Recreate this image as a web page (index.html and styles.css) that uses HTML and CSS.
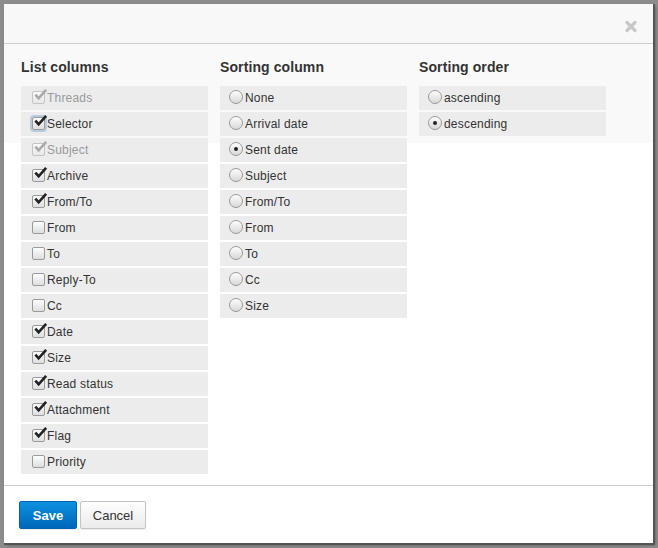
FILE: index.html
```html
<!DOCTYPE html>
<html>
<head>
<meta charset="utf-8">
<link rel="stylesheet" href="styles.css">
</head>
<body>
<div class="dialog">
  <div class="header">
    <span class="close" aria-label="Close">
      <svg width="12" height="13" viewBox="0 0 12 13"><path d="M2 2.5 L10 10.5 M10 2.5 L2 10.5" stroke="#c8c8c8" stroke-width="3.2" stroke-linecap="round"/></svg>
    </span>
  </div>
  <div class="content">
    <div class="col">
      <h3>List columns</h3>
      <div class="row disabled"><span class="cb"><svg class="tick" viewBox="0 0 16 16"><path d="M2.5 7 L6 11 L14 2"/></svg></span>Threads</div>
      <div class="row"><span class="cb focus"><svg class="tick" viewBox="0 0 16 16"><path d="M2.5 7 L6 11 L14 2"/></svg></span>Selector</div>
      <div class="row disabled"><span class="cb"><svg class="tick" viewBox="0 0 16 16"><path d="M2.5 7 L6 11 L14 2"/></svg></span>Subject</div>
      <div class="row"><span class="cb"><svg class="tick" viewBox="0 0 16 16"><path d="M2.5 7 L6 11 L14 2"/></svg></span>Archive</div>
      <div class="row"><span class="cb"><svg class="tick" viewBox="0 0 16 16"><path d="M2.5 7 L6 11 L14 2"/></svg></span>From/To</div>
      <div class="row"><span class="cb"></span>From</div>
      <div class="row"><span class="cb"></span>To</div>
      <div class="row"><span class="cb"></span>Reply-To</div>
      <div class="row"><span class="cb"></span>Cc</div>
      <div class="row"><span class="cb"><svg class="tick" viewBox="0 0 16 16"><path d="M2.5 7 L6 11 L14 2"/></svg></span>Date</div>
      <div class="row"><span class="cb"><svg class="tick" viewBox="0 0 16 16"><path d="M2.5 7 L6 11 L14 2"/></svg></span>Size</div>
      <div class="row"><span class="cb"><svg class="tick" viewBox="0 0 16 16"><path d="M2.5 7 L6 11 L14 2"/></svg></span>Read status</div>
      <div class="row"><span class="cb"><svg class="tick" viewBox="0 0 16 16"><path d="M2.5 7 L6 11 L14 2"/></svg></span>Attachment</div>
      <div class="row"><span class="cb"><svg class="tick" viewBox="0 0 16 16"><path d="M2.5 7 L6 11 L14 2"/></svg></span>Flag</div>
      <div class="row"><span class="cb"></span>Priority</div>
    </div>
    <div class="col">
      <h3>Sorting column</h3>
      <div class="row"><span class="rb"></span>None</div>
      <div class="row"><span class="rb"></span>Arrival date</div>
      <div class="row"><span class="rb on"></span>Sent date</div>
      <div class="row"><span class="rb"></span>Subject</div>
      <div class="row"><span class="rb"></span>From/To</div>
      <div class="row"><span class="rb"></span>From</div>
      <div class="row"><span class="rb"></span>To</div>
      <div class="row"><span class="rb"></span>Cc</div>
      <div class="row"><span class="rb"></span>Size</div>
    </div>
    <div class="col">
      <h3>Sorting order</h3>
      <div class="row"><span class="rb"></span>ascending</div>
      <div class="row"><span class="rb on"></span>descending</div>
    </div>
  </div>
  <div class="footer">
    <button class="btn primary">Save</button>
    <button class="btn">Cancel</button>
  </div>
</div>
</body>
</html>
```

FILE: styles.css
```css
html, body {
  margin: 0;
  padding: 0;
}
body {
  background: #8c8c8c;
  width: 658px;
  height: 548px;
  overflow: hidden;
  font-family: "Liberation Sans", Arial, sans-serif;
  color: #333;
}
.dialog {
  margin: 4px 0 0 4px;
  width: 649px;
  height: 539px;
  background: #fff;
  display: flex;
  flex-direction: column;
  box-shadow: 1px 1px 0 1px #555, 2px 2px 3px rgba(0,0,0,0.4);
}
.header {
  height: 39px;
  flex: none;
  background: #f8f8f8;
  border-bottom: 1px solid #cfcfcf;
  display: flex;
  justify-content: flex-end;
  align-items: flex-start;
}
.close {
  margin: 16px 16px 0 0;
  width: 12px;
  height: 13px;
  display: block;
}
.close svg { display: block; }
.content {
  flex: 1;
  padding: 13px 0 0 17px;
  background: linear-gradient(#f9f9f9 0, #f9f9f9 99px, #fff 99px);
  display: grid;
  grid-template-columns: 187px 187px 187px;
  column-gap: 12px;
  align-content: start;
  align-items: start;
}
.col { display: flex; flex-direction: column; }
h3 {
  margin: 0 0 9px 0;
  font-size: 14px;
  line-height: 20px;
  font-weight: bold;
  color: #333;
  letter-spacing: 0.1px;
}
.row {
  height: 24px;
  margin-bottom: 2px;
  background: #ececec;
  display: flex;
  align-items: center;
  padding-left: 11px;
  font-size: 12px;
  color: #333;
  letter-spacing: 0.2px;
}
.row.disabled { color: #9a9a9a; }
.cb {
  position: relative;
  width: 11px;
  height: 11px;
  border: 1px solid #9a9a9a;
  border-radius: 2px;
  background: linear-gradient(#fdfdfd, #dedede);
  margin-right: 2px;
  flex: none;
  margin-top: -1px;
}
.cb.focus {
  box-shadow: 0 0 0 2px rgba(140, 175, 215, 0.55);
}
.tick {
  position: absolute;
  left: 0;
  top: -4px;
  width: 15px;
  height: 15px;
  overflow: visible;
}
.tick path {
  fill: none;
  stroke: #222;
  stroke-width: 2.8;
  stroke-linecap: butt;
  stroke-linejoin: miter;
}
.disabled .cb { border-color: #c4c4c4; background: linear-gradient(#fbfbfb, #e8e8e8); }
.disabled .tick path { stroke: #aaa; }
.rb {
  position: relative;
  width: 12px;
  height: 12px;
  border: 1px solid #9a9a9a;
  border-radius: 50%;
  background: linear-gradient(#fdfdfd, #d8d8d8);
  margin-right: 2px;
  margin-left: -2px;
  flex: none;
  margin-top: -3px;
}
.rb.on::after {
  content: "";
  position: absolute;
  left: 4px;
  top: 4px;
  width: 4px;
  height: 4px;
  border-radius: 50%;
  background: #222;
}
.footer {
  flex: none;
  height: 58px;
  border-top: 1px solid #cfcfcf;
  box-sizing: border-box;
  padding: 15px 0 0 15px;
  display: flex;
  gap: 3px;
  align-items: flex-start;
}
.btn {
  height: 28px;
  margin: 0;
  padding: 0 10px;
  font-family: "Liberation Sans", Arial, sans-serif;
  font-size: 13px;
  color: #333;
  border: 1px solid #c4c4c4;
  border-radius: 2px;
  background: linear-gradient(#fefefe, #ebebeb);
  box-shadow: 0 1px 1px rgba(0,0,0,0.08);
  width: 66px;
}
.btn.primary {
  width: 58px;
  color: #fff;
  font-weight: bold;
  border-color: #0065ad;
  background: linear-gradient(#0d91e0, #0066b8);
}
```
